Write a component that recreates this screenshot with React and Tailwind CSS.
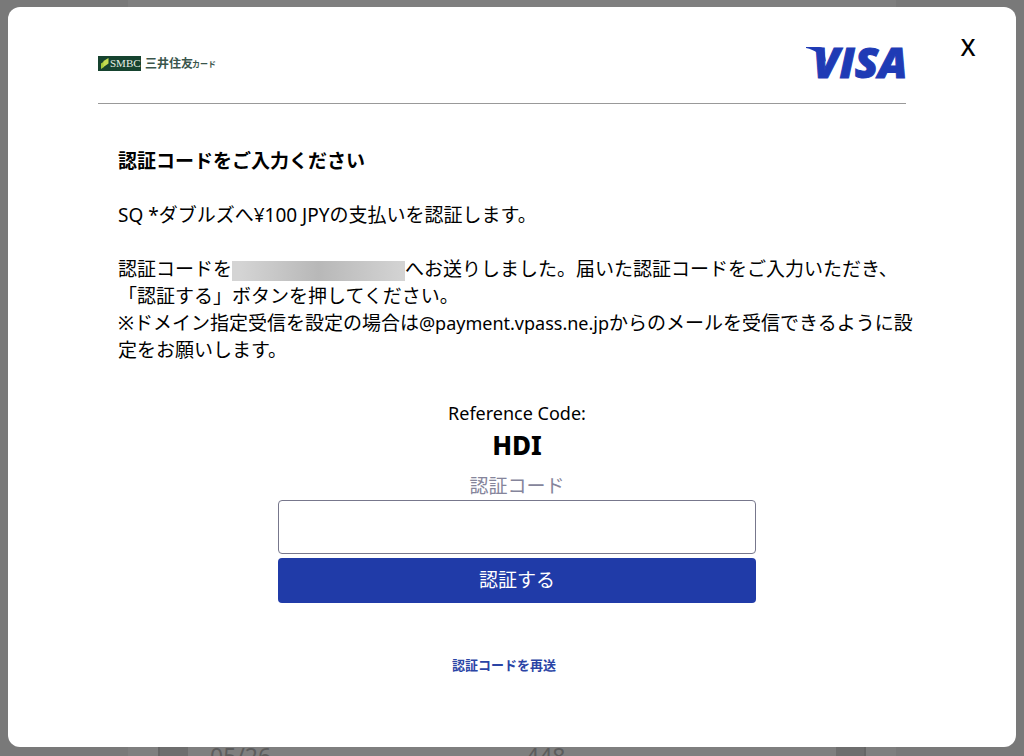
import { useState } from 'react';

function SmbcLogo() {
  return (
    <svg width="122" height="18" viewBox="0 0 122 18" role="img" aria-label="SMBC 三井住友カード">
      <rect x="0" y="2" width="43" height="15" fill="#16432f" />
      <path d="M3 9.500L6 7.500V13L3 15Z" fill="#a5cc3a" />
      <path d="M5.500 7L10.500 4V9.500L5.500 13Z" fill="#c3dc52" />
      <text x="12" y="13" fontSize="11" fill="#e6efe6" fontFamily="'Liberation Serif', serif">SMBC</text>
      <text x="47" y="14" fontSize="12" fontWeight="700" fill="#3a554b" fontFamily="'Noto Sans CJK JP', sans-serif">三井住友</text>
      <text x="94" y="13" fontSize="8" fontWeight="700" fill="#3a554b" fontFamily="'Noto Sans CJK JP', sans-serif">カード</text>
    </svg>
  );
}

function VisaLogo() {
  return (
    <svg width="100" height="36" viewBox="0 0 100 36" role="img" aria-label="VISA" className="overflow-visible">
      <path d="M0 2H13C16 2 17.500 3 18 5L20 17C15 9 9 5 0 3Z" fill="#1f3bb5" />
      <text x="7" y="33" fontSize="43" fontWeight="800" fontStyle="italic" fill="#1f3bb5" stroke="#1f3bb5" strokeWidth="1" fontFamily="'Open Sans', sans-serif">VISA</text>
    </svg>
  );
}

// checkout page that stays dimmed under the dialog
function DimmedPage() {
  return (
    <div aria-hidden="true" className="absolute inset-0 flex justify-center overflow-hidden bg-[#797979]">
      <div className="flex w-3/4 items-end justify-center bg-[#7f7f7f]">
        <div className="flex h-3 w-[708px] justify-between border-x-2 border-[#666666] text-[23px] leading-6 text-[#5c5c5c]">
          <div className="w-7 bg-[#6e6e6e]" />
          <div className="flex flex-1 justify-between pl-[22px]">
            <span>05/26</span>
            <span className="w-[310px]">448</span>
          </div>
          <div className="w-7 bg-[#6e6e6e]" />
        </div>
      </div>
    </div>
  );
}

export default function App() {
  const [code, setCode] = useState('');

  return (
    <div className="relative grid min-h-screen px-2 pt-[7px] pb-[9px] font-['Noto_Sans','Noto_Sans_CJK_JP',sans-serif] text-black">
      <DimmedPage />
      <main role="dialog" aria-label="認証" className="relative flex items-start rounded-xl bg-white pl-[90px]">
        <div className="min-w-0 flex-1">
          <header className="flex h-[97px] items-center justify-between border-b border-[#999999] pt-4">
            <a href="#smbc"><SmbcLogo /></a>
            <VisaLogo />
          </header>

          <div className="-mr-[10px] pt-11 pl-5 text-[19px] leading-[27px]">
            <h1 className="font-bold">認証コードをご入力ください</h1>
            <p className="mt-[27px]">SQ *ダブルズへ¥100 JPYの支払いを認証します。</p>
            <p className="mt-[27px]">
              認証コードを
              <span className="inline-block h-5 w-[173px] bg-linear-to-r from-[#d4d4d4] from-5% via-[#b8b8b8] via-50% to-[#d4d4d4] align-middle" />
              へお送りしました。届いた認証コードをご入力いただき、
              <br />
              「認証する」ボタンを押してください。
              <br />
              ※ドメイン指定受信を設定の場合は<span className="text-lg leading-[27px]">@payment.vpass.ne.jp</span>からのメールを受信できるように設定をお願いします。
            </p>

            <form onSubmit={(e) => e.preventDefault()} className="mx-auto mt-9 flex w-3/5 flex-col text-center">
              <p className="text-lg leading-[27px]">Reference Code:</p>
              <p className="text-[26px] leading-9 font-extrabold">HDI</p>
              <label htmlFor="code" className="mt-[10px] text-[#85859b]">認証コード</label>
              <input
                id="code"
                type="text"
                value={code}
                onChange={(e) => setCode(e.target.value)}
                className="h-[54px] rounded border border-[#77778c] px-3 focus:outline-none focus:ring-2 focus:ring-blue-700"
              />
              <button type="submit" className="mt-1 h-[45px] rounded bg-[#203ba8] text-white hover:bg-blue-900">
                認証する
              </button>
            </form>
          </div>

          <div className="mt-12 pl-1 text-center">
            <a href="#resend" className="text-[13px] leading-7 font-bold text-[#2a44a5] hover:underline">認証コードを再送</a>
          </div>
        </div>

        <div className="flex w-[110px] justify-center pt-6 pl-[14px]">
          <button type="button" aria-label="閉じる" className="text-2xl leading-8 font-medium">X</button>
        </div>
      </main>
    </div>
  );
}
